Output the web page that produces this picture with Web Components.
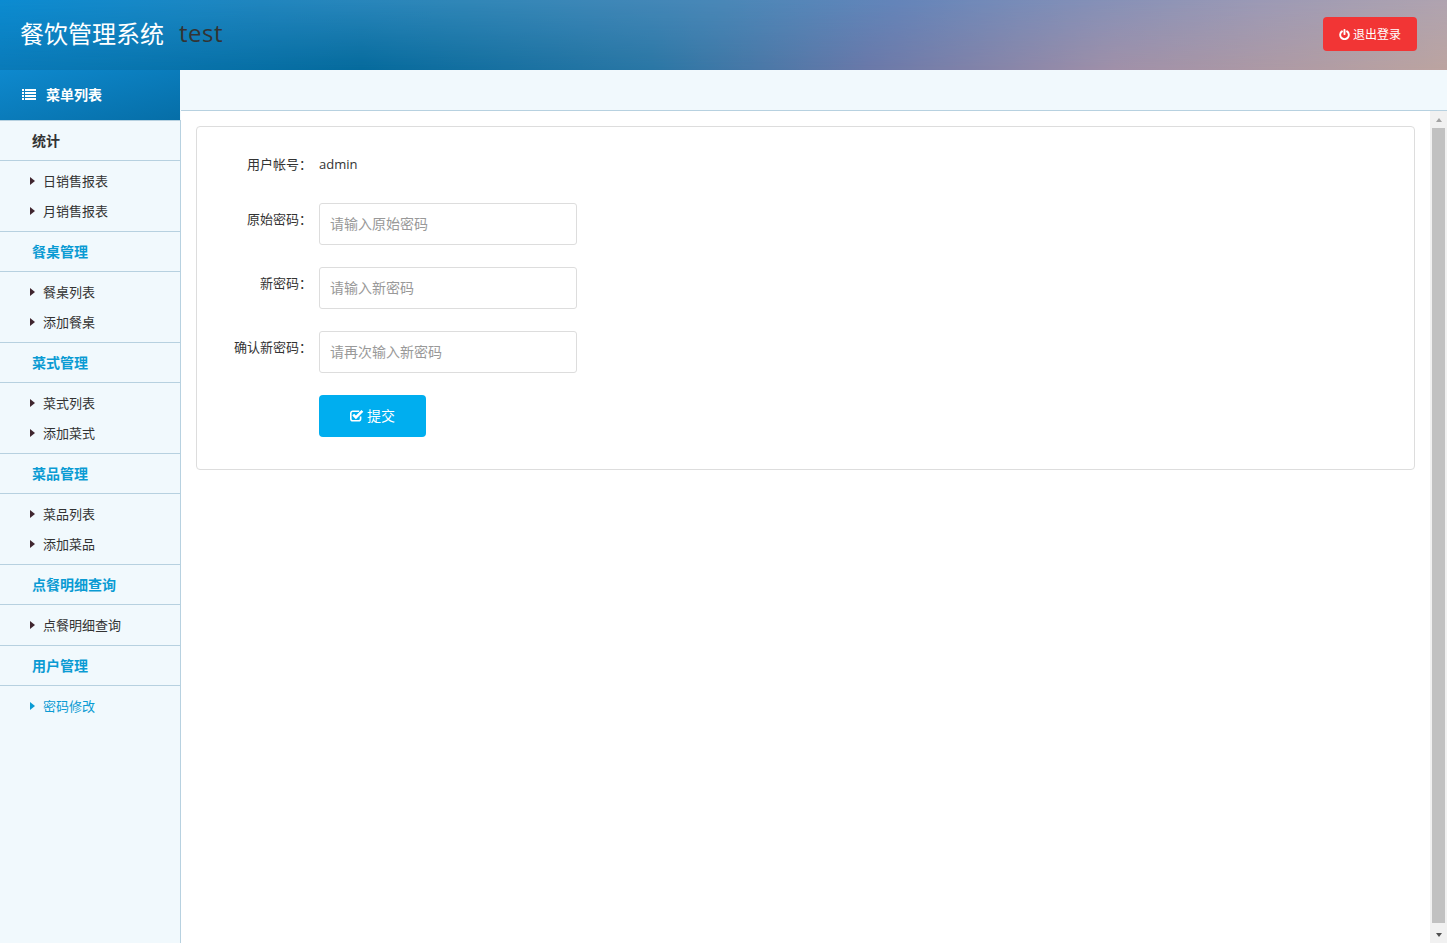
<!DOCTYPE html>
<html lang="zh">
<head>
<meta charset="utf-8">
<title>餐饮管理系统</title>
<style>
html,body{margin:0;padding:0;height:100%;overflow:hidden}
body{font-family:"Open Sans","Noto Sans CJK SC",sans-serif;font-size:13px;color:#333;background:#fff}
app-shell{height:943px}
</style>
</head>
<body>
<app-shell>
  <app-header slot="header" title-text="餐饮管理系统" sub="test"></app-header>
  <side-menu slot="side">
    <menu-group label="统计" dark>
      <menu-item>日销售报表</menu-item>
      <menu-item>月销售报表</menu-item>
    </menu-group>
    <menu-group label="餐桌管理">
      <menu-item>餐桌列表</menu-item>
      <menu-item>添加餐桌</menu-item>
    </menu-group>
    <menu-group label="菜式管理">
      <menu-item>菜式列表</menu-item>
      <menu-item>添加菜式</menu-item>
    </menu-group>
    <menu-group label="菜品管理">
      <menu-item>菜品列表</menu-item>
      <menu-item>添加菜品</menu-item>
    </menu-group>
    <menu-group label="点餐明细查询">
      <menu-item>点餐明细查询</menu-item>
    </menu-group>
    <menu-group label="用户管理" last>
      <menu-item active>密码修改</menu-item>
    </menu-group>
  </side-menu>
  <fake-scrollbar slot="scroll"></fake-scrollbar>
  <form-card slot="main">
    <form-row label="用户帐号：" plain>admin</form-row>
    <form-row label="原始密码："><text-field placeholder="请输入原始密码"></text-field></form-row>
    <form-row label="新密码："><text-field placeholder="请输入新密码"></text-field></form-row>
    <form-row label="确认新密码："><text-field placeholder="请再次输入新密码"></text-field></form-row>
    <form-row><submit-button>提交</submit-button></form-row>
  </form-card>
</app-shell>
<script>
function def(name, css, html){
  customElements.define(name, class extends HTMLElement{
    constructor(){super();const r=this.attachShadow({mode:'open'});r.innerHTML='<style>'+css+'</style>'+html;}
    connectedCallback(){
      const r=this.shadowRoot;
      r.querySelectorAll('[data-attr]').forEach(n=>{n.textContent=this.getAttribute(n.dataset.attr)||'';});
      r.querySelectorAll('input').forEach(n=>{n.placeholder=this.getAttribute('placeholder')||'';});
    }
  });
}
def('app-shell',`
:host{display:grid;grid-template-columns:181px 1fr 17px;grid-template-rows:70px 41px 1fr;width:1447px;overflow:hidden}
.h{grid-column:1/4;grid-row:1}
.s{grid-column:1;grid-row:2/4;display:block;min-height:0}
.bar{grid-column:2/4;grid-row:2;background:#f1f9fd;border-bottom:1px solid #b7d1e0}
.m{grid-column:2;grid-row:3;padding:15px 15px 0 15px;min-width:0}
.sc{grid-column:3;grid-row:3;min-height:0}
`,`<div class="h"><slot name="header"></slot></div>
<div class="s"><slot name="side"></slot></div>
<div class="bar"></div>
<div class="m"><slot name="main"></slot></div>
<div class="sc"><slot name="scroll"></slot></div>`);

def('app-header',`
:host{position:relative;display:flex;align-items:center;justify-content:space-between;height:70px;box-sizing:border-box;padding:0 30px 2px 20px;
background:linear-gradient(90deg,#0c8cd2 0%,#2186bf 18%,#3187b8 32%,#4a88b8 50%,#6485ba 62%,#8390b8 75%,#9c9ab6 87%,#b0a4b0 100%)}
:host::before{content:"";position:absolute;inset:0;background:linear-gradient(90deg,#0a7ab8 0%,#056a9c 25%,#2a76a4 45%,#6a78a8 60%,#a090a8 77%,#bca4a0 100%);
-webkit-mask-image:linear-gradient(180deg,transparent 0,#000 100%);mask-image:linear-gradient(180deg,transparent 0,#000 100%)}
.t{position:relative;z-index:1;display:flex;align-items:center;gap:15px;font-size:24px;line-height:32px;padding-bottom:2px}
.a{color:#fff;font-family:"Noto Sans CJK SC",sans-serif}
.b{color:#333;font-family:"Open Sans",sans-serif;letter-spacing:.5px}
button{position:relative;z-index:1;display:flex;align-items:center;justify-content:center;gap:3px;width:94px;height:34px;border:0;border-radius:4px;background:#f23535;color:#fff;font:12px "Noto Sans CJK SC",sans-serif;padding:0 0 2px}
svg{width:11px;height:11px;display:block;margin-top:3px}
`,`<div class="t"><span class="a" data-attr="title-text"></span><span class="b" data-attr="sub"></span></div>
<button><svg viewBox="0 0 12 12" fill="none" stroke="#fff" stroke-width="2.1" stroke-linecap="round"><path d="M3.2 2.6A4.7 4.7 0 1 0 8.8 2.6"/><path d="M6 1v4.6"/></svg>退出登录</button>`);

def('side-menu',`
:host{display:block;height:100%;box-sizing:border-box;background:#f1f9fd;border-right:1px solid #b7d1e0}
.head{display:flex;align-items:center;gap:10px;height:48px;padding:0 0 2px 22px;color:#fff;font:bold 14px "Noto Sans CJK SC",sans-serif;
background:linear-gradient(165deg,#0e89ce,#066ea7);box-shadow:1px -1px 0 #f1f9fd;border-bottom:1px solid #b7d1e0}
svg{width:14px;height:12px;display:block}
`,`<div class="head"><svg viewBox="0 0 14 12" fill="#fff"><path d="M0 1h2v2H0zM3 1h11v2H3zM0 4h2v2H0zM3 4h11v2H3zM0 7h2v2H0zM3 7h11v2H3zM0 10h2v2H0zM3 10h11v2H3z"/></svg>菜单列表</div><slot></slot>`);

def('menu-group',`
:host{display:block}
.title{height:39px;padding-left:32px;font:bold 14px/38px "Noto Sans CJK SC",sans-serif;color:#0a9bd3;border-bottom:1px solid #b7d1e0}
:host([dark]) .title{color:#333}
.list{padding:5px 0;border-bottom:1px solid #b7d1e0}
:host([last]) .list{border-bottom:0}
`,`<div class="title" data-attr="label"></div><div class="list"><slot></slot></div>`);

def('menu-item',`
:host{display:flex;align-items:center;height:30px;padding-left:30px;font:13px "Noto Sans CJK SC",sans-serif;color:#333}
:host([active]){color:#0a9bd3}
i{width:0;height:0;border-style:solid;border-width:4px 0 4px 5px;border-color:transparent transparent transparent #40262f;margin-right:8px}
:host([active]) i{border-left-color:#0a9bd3}
span{margin-bottom:2px}
`,`<i></i><span><slot></slot></span>`);

def('form-card',`
:host{display:block;height:344px;box-sizing:border-box;border:1px solid #ddd;border-radius:4px;background:#fff;padding:21px 0 0}
`,`<slot></slot>`);

def('form-row',`
:host{display:grid;grid-template-columns:115px 1fr;column-gap:7px;margin:0 0 22px;align-items:start;min-height:42px;font:13px "Noto Sans CJK SC","Open Sans",sans-serif;color:#333}
:host([plain]){min-height:0;height:32px;margin-bottom:23px;align-items:center}
.l{text-align:right;line-height:32px;white-space:nowrap}
.v{font-family:"Open Sans",sans-serif;line-height:32px}
:host(:not([plain])) .v{line-height:normal}
`,`<div class="l" data-attr="label"></div><div class="v"><slot></slot></div>`);

def('text-field',`
:host{display:block;width:258px;height:42px}
input{display:block;width:100%;height:100%;box-sizing:border-box;border:1px solid #ddd;border-radius:3px;padding:0 10px 2px;background:#fff;font:14px "Noto Sans CJK SC",sans-serif;color:#333;outline:0}
input::placeholder{color:#999;opacity:1}
`,`<input type="password" autocomplete="off">`);

def('submit-button',`
:host{display:block;width:107px;height:42px}
button{display:flex;align-items:center;justify-content:center;gap:3px;width:100%;height:100%;border:0;border-radius:4px;background:#00aeef;color:#fff;font:14px "Noto Sans CJK SC",sans-serif;padding:0 0 2px}
svg{width:14px;height:13px;display:block;margin-top:1px}
`,`<button><svg viewBox="0 0 14 13" fill="none"><path d="M10.6 7.6v2.2A2 2 0 0 1 8.6 11.8H2.8A2 2 0 0 1 .8 9.8V4.2A2 2 0 0 1 2.8 2.2H9.2" stroke="#fff" stroke-width="1.6"/><path d="M3.2 5.6 5.9 8.3 12.4 1.8" stroke="#fff" stroke-width="2.6"/></svg><slot></slot></button>`);

def('fake-scrollbar',`
:host{display:flex;flex-direction:column;height:100%;background:#f1f1f1}
.a{height:17px;display:flex;align-items:center;justify-content:center;flex:none}
.t{flex:1;padding-bottom:3px;display:flex;min-height:0}
.t b{flex:1;background:#c1c1c1;margin:0 2px;display:block}
i{width:0;height:0;border-style:solid;border-color:transparent}
.u i{border-width:0 3.5px 4px;border-bottom-color:#a3a3a3}
.d i{border-width:4px 3.5px 0;border-top-color:#505050}
`,`<div class="a u"><i></i></div><div class="t"><b></b></div><div class="a d"><i></i></div>`);
</script>
</body>
</html>
